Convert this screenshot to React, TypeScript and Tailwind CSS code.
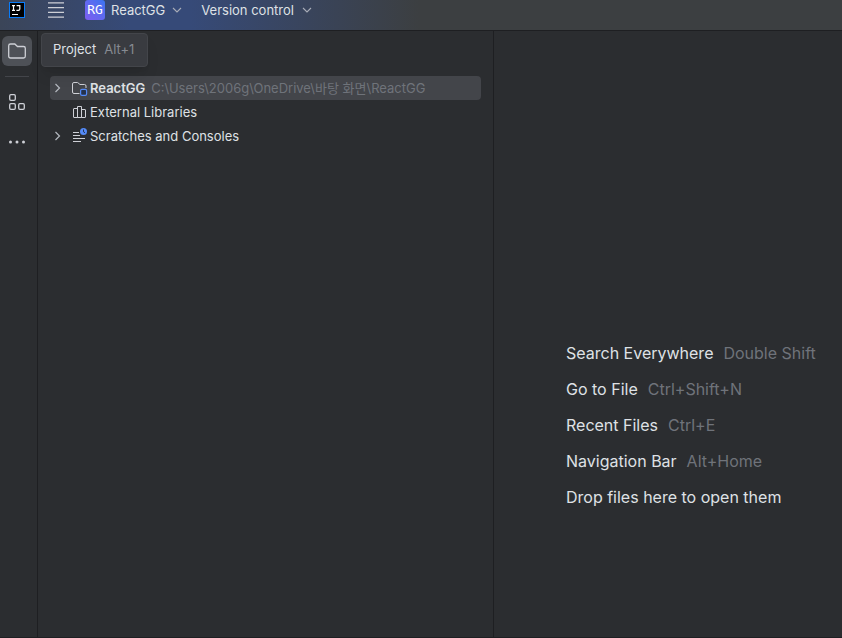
import React from 'react';

const shortcuts = [
  { label: 'Search Everywhere', keys: 'Double Shift' },
  { label: 'Go to File', keys: 'Ctrl+Shift+N' },
  { label: 'Recent Files', keys: 'Ctrl+E' },
  { label: 'Navigation Bar', keys: 'Alt+Home' },
  { label: 'Drop files here to open them', keys: '' },
];

const ChevronDown: React.FC = () => (
  <svg width="10" height="10" viewBox="0 0 10 10" fill="none" stroke="#a9adb8" strokeWidth="1.1" aria-hidden="true">
    <path d="M1 3l4 4 4-4" />
  </svg>
);

const ChevronRight: React.FC = () => (
  <svg width="16" height="16" viewBox="0 0 16 16" fill="none" stroke="#b4b8bf" strokeWidth="1.2" aria-hidden="true">
    <path d="M5.5 4l4 4-4 4" />
  </svg>
);

const ModuleIcon: React.FC = () => (
  <svg width="16" height="16" viewBox="0 0 16 16" fill="none" aria-hidden="true">
    <path
      d="M7.500 13.500H2a1.500 1.500 0 0 1-1.500-1.500V4A1.500 1.500 0 0 1 2 2.500h3.600L8 4.500h4.500A1.500 1.500 0 0 1 14 6v2"
      stroke="#ced0d6"
    />
    <rect x="8.600" y="9.400" width="6" height="6" rx="1.300" fill="#25324d" stroke="#548af7" strokeWidth="1.200" />
  </svg>
);

const LibraryIcon: React.FC = () => (
  <svg width="16" height="16" viewBox="0 0 16 16" fill="none" stroke="#ced0d6" aria-hidden="true">
    <path d="M2 4.500h3.500v9H2a.5.5 0 0 1-.5-.5V5a.5.5 0 0 1 .5-.5z" />
    <path d="M5.500 2.500h4v11h-4z" />
    <path d="M9.500 5.500H13a.5.5 0 0 1 .5.5v7a.5.5 0 0 1-.5.5H9.500z" />
  </svg>
);

const ScratchesIcon: React.FC = () => (
  <svg width="16" height="16" viewBox="0 0 16 16" fill="none" aria-hidden="true">
    <path d="M1 4.500h6M1 7.500h7M1 10.500h12M1 13.500h8" stroke="#ced0d6" />
    <circle cx="11.500" cy="3.500" r="3.500" fill="#548af7" />
    <path d="M11.500 1.500v2.300l1.500.9" stroke="#25324d" />
  </svg>
);

const treeItems = [
  {
    name: 'ReactGG',
    path: 'C:\\Users\\2006g\\OneDrive\\바탕 화면\\ReactGG',
    icon: <ModuleIcon />,
    expandable: true,
    selected: true,
  },
  { name: 'External Libraries', path: '', icon: <LibraryIcon />, expandable: false, selected: false },
  { name: 'Scratches and Consoles', path: '', icon: <ScratchesIcon />, expandable: true, selected: false },
];

const TitleBar: React.FC = () => (
  <header className="flex h-[31px] items-start border-b border-[#1e1f22] bg-[linear-gradient(90deg,#3b4558_0px,#364a78_130px,#364a78_190px,#3c3f41_420px)] text-[13px] text-[#dfe1e5]">
    {/* IDE logo */}
    <svg className="ml-[9px] mt-[2px]" width="16" height="16" viewBox="0 0 16 16" aria-hidden="true">
      <rect width="16" height="16" fill="#087cfa" />
      <rect x="1" y="1" width="14" height="14" fill="#000" />
      <path
        d="M3 3.600h3M4.500 3.500v5M3 8.400h3M7.600 3.600h3.200v3.400q0 1.400-1.400 1.400H7.400"
        stroke="#fff"
        strokeWidth="1.200"
        fill="none"
      />
      <path d="M3 12.500h6" stroke="#fff" />
    </svg>
    <button aria-label="Main Menu" className="ml-[23px] mt-[2px]">
      <svg width="16" height="16" viewBox="0 0 16 16" stroke="#ced0d6" strokeWidth="1.300" aria-hidden="true">
        <path d="M0 .8h16M0 5.600h16M0 10.400h16M0 15.200h16" />
      </svg>
    </button>
    <button className="ml-[21px] flex h-5 items-center">
      <span className="mr-[6px] flex h-5 w-5 items-center justify-center rounded-[3px] bg-linear-to-bl from-[#3574f0] to-[#7d5cf0] font-['DejaVu_Sans_Mono'] text-[13px] text-white">
        RG
      </span>
      <span className="mr-[7px] pt-[2px]">ReactGG</span>
      <ChevronDown />
    </button>
    <button className="ml-[19px] flex h-5 items-center">
      <span className="mr-2 pt-[2px]">Version control</span>
      <ChevronDown />
    </button>
  </header>
);

const ToolStripe: React.FC = () => (
  <nav className="flex w-[38px] shrink-0 flex-col border-r border-[#1e1f22] pl-[2px] pt-[5px]">
    <button aria-label="Project" className="flex h-[30px] w-[30px] items-center justify-center rounded-md bg-[#4e5157]">
      <svg width="20" height="20" viewBox="0 0 20 20" fill="none" stroke="#ced0d6" strokeWidth="1.300" aria-hidden="true">
        <path d="M1.700 15.200V4.800a1.800 1.800 0 0 1 1.800-1.800h4.300l2.700 2.500h6a1.800 1.800 0 0 1 1.800 1.800v7.900a1.800 1.800 0 0 1-1.800 1.800h-13a1.800 1.800 0 0 1-1.800-1.800z" />
      </svg>
    </button>
    <div className="ml-[3px] mt-[10px] h-px w-6 bg-[#43454a]" />
    <button aria-label="Structure" className="mt-[10px] flex h-[30px] w-[30px] items-center justify-center">
      <svg width="20" height="20" viewBox="0 0 20 20" fill="none" stroke="#ced0d6" strokeWidth="1.300" aria-hidden="true">
        <rect x="2.700" y="2.700" width="5.600" height="5.600" rx="1.200" />
        <rect x="2.700" y="11.700" width="5.600" height="5.600" rx="1.200" />
        <rect x="11.700" y="11.700" width="5.600" height="5.600" rx="1.200" />
      </svg>
    </button>
    <button aria-label="More tool windows" className="mt-[10px] flex h-[30px] w-[30px] items-center justify-center">
      <svg width="20" height="20" viewBox="0 0 20 20" fill="#ced0d6" aria-hidden="true">
        <circle cx="3.500" cy="10" r="1.500" />
        <circle cx="10" cy="10" r="1.500" />
        <circle cx="16.500" cy="10" r="1.500" />
      </svg>
    </button>
  </nav>
);

const ProjectPanel: React.FC = () => (
  <section className="relative w-[456px] shrink-0 border-r border-[#1e1f22] pl-3 pr-3 pt-[45px] text-[13px]">
    <ul>
      {treeItems.map((item) => (
        <li
          key={item.name}
          className={`flex h-6 items-center rounded-[4px] whitespace-nowrap ${item.selected ? 'bg-[#43454a]' : ''}`}
        >
          <span className="mr-[6px] h-4 w-4">{item.expandable && <ChevronRight />}</span>
          <span className="mr-[2px]">{item.icon}</span>
          <span className={`pt-[2px] ${item.selected ? 'font-semibold' : ''}`}>{item.name}</span>
          {item.path && <span className="ml-[6px] pt-[2px] text-[#6f737a]">{item.path}</span>}
        </li>
      ))}
    </ul>

    {/* Tooltip of the Project button */}
    <div
      role="tooltip"
      className="absolute left-[3px] top-[2px] flex h-[34px] items-center gap-2 rounded-[4px] border border-[#43454a] bg-[#393b40] pl-[11px] pr-[13px] shadow-lg"
    >
      <span>Project</span>
      <span className="text-[#868a91]">Alt+1</span>
    </div>
  </section>
);

const App: React.FC = () => {
  return (
    <div className="flex min-h-screen flex-col border-b border-[#1e1f22] bg-[#2b2d30] font-['Inter','Noto_Sans_CJK_KR',sans-serif] text-[#dfe1e5]">
      <TitleBar />
      <div className="flex flex-1">
        <ToolStripe />
        <ProjectPanel />
        <main className="min-w-0 flex-1 pl-[72px] pt-[304px] text-[16px]">
          {shortcuts.map((s) => (
            <p key={s.label} className="flex h-9 items-center gap-[10px] whitespace-nowrap">
              <span>{s.label}</span>
              {s.keys && <span className="text-[#6f737a]">{s.keys}</span>}
            </p>
          ))}
        </main>
      </div>
    </div>
  );
};

export default App;
